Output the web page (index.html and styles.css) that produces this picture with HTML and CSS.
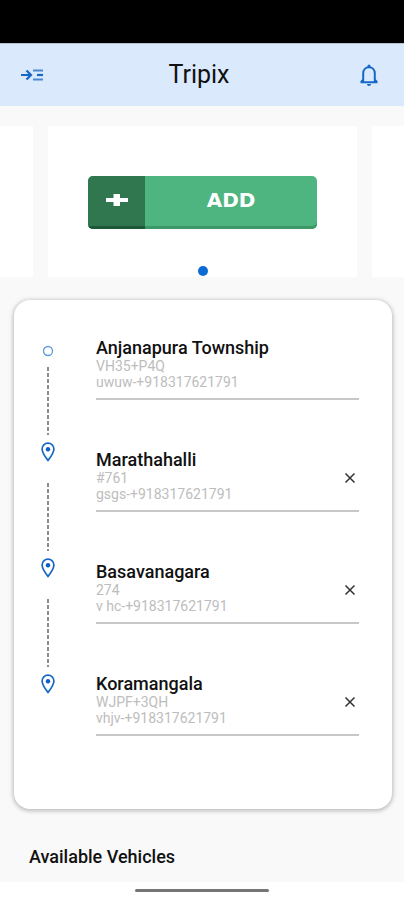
FILE: index.html
```html
<!DOCTYPE html>
<html lang="en">
<head>
<meta charset="utf-8">
<meta name="viewport" content="width=device-width, initial-scale=1">
<title>Tripix</title>
<link rel="stylesheet" href="styles.css">
</head>
<body>
<svg class="sprite" aria-hidden="true">
  <symbol id="pin" viewBox="0 0 14 20">
    <path d="M7 1.2C3.7 1.2 1.1 3.8 1.1 7c0 4 5.9 11.400 5.900 11.400S12.900 11 12.900 7C12.900 3.800 10.300 1.200 7 1.200Z" fill="none" stroke="#1668c2" stroke-width="1.700"/>
    <circle cx="7" cy="7.200" r="2.200" fill="#0d5cc0"/>
  </symbol>
  <symbol id="close" viewBox="0 0 12 12">
    <path d="M1.500 1.500l9 9M10.500 1.500l-9 9" stroke="#333" stroke-width="1.500"/>
  </symbol>
</svg>
<div class="status-bar"></div>
<header class="app-bar">
  <button class="icon-button" aria-label="Open menu">
    <svg width="24" height="16" viewBox="0 0 24 16" fill="none" stroke="#4a88cf" stroke-width="2.200">
      <path d="M1 8h9M6.500 3.500L11 8l-4.500 4.500" stroke="#1766c8"/>
      <path d="M13 3.500h10M13 12.500h10"/>
      <path d="M17 8h6" stroke="#1766c8"/>
    </svg>
  </button>
  <h1 class="app-title">Tripix</h1>
  <button class="icon-button" aria-label="Notifications">
    <svg width="20" height="24" viewBox="0 0 20 24">
      <path d="M1.500 19.200h17M4.200 19V10.500C4.200 6.500 6.700 4.300 10 4.300s5.800 2.200 5.800 6.200V19M2 19l2.200-2.200M18 19l-2.200-2.200" fill="none" stroke="#1668c8" stroke-width="2"/>
      <path d="M8.500 4.500V3a1.500 1.500 0 0 1 3 0v1.500ZM8 21h4a2 2 0 0 1-4 0Z" fill="#1668c8"/>
    </svg>
  </button>
</header>
<main class="page">
  <section class="carousel" aria-label="Offers">
    <div class="slide slide-edge"></div>
    <div class="slide slide-main">
      <button class="add-button">
        <span class="add-plus"><svg width="22" height="14" viewBox="0 0 22 14" aria-hidden="true"><path d="M0 5h7.500V1h6.500v4h8v4h-8v4H7.500V9H0Z" fill="#fff"/></svg></span>
        <span class="add-label">ADD</span>
      </button>
      <span class="dot"></span>
    </div>
    <div class="slide slide-edge"></div>
  </section>
  <section class="route-card" aria-label="Route">
    <div class="timeline" aria-hidden="true">
      <svg class="origin" width="12" height="12" viewBox="0 0 12 12"><circle cx="6" cy="6" r="4.500" fill="none" stroke="#5c9bd6" stroke-width="1.300"/></svg>
      <span class="dash"></span>
      <svg class="pin"><use href="#pin"/></svg>
      <span class="dash"></span>
      <svg class="pin"><use href="#pin"/></svg>
      <span class="dash"></span>
      <svg class="pin"><use href="#pin"/></svg>
    </div>
    <ol class="stops">
      <li class="stop">
        <div><h2 class="place">Anjanapura Township</h2><p class="detail">VH35+P4Q</p><p class="detail">uwuw-+918317621791</p></div>
      </li>
      <li class="stop">
        <div><h2 class="place">Marathahalli</h2><p class="detail">#761</p><p class="detail">gsgs-+918317621791</p></div>
        <button class="remove" aria-label="Remove Marathahalli"><svg width="12" height="12"><use href="#close"/></svg></button>
      </li>
      <li class="stop">
        <div><h2 class="place">Basavanagara</h2><p class="detail">274</p><p class="detail">v hc-+918317621791</p></div>
        <button class="remove" aria-label="Remove Basavanagara"><svg width="12" height="12"><use href="#close"/></svg></button>
      </li>
      <li class="stop">
        <div><h2 class="place">Koramangala</h2><p class="detail">WJPF+3QH</p><p class="detail">vhjv-+918317621791</p></div>
        <button class="remove" aria-label="Remove Koramangala"><svg width="12" height="12"><use href="#close"/></svg></button>
      </li>
    </ol>
  </section>
  <h2 class="section-title">Available Vehicles</h2>
</main>
<footer class="nav-bar"><span class="handle"></span></footer>
</body>
</html>
```
FILE: styles.css
```css
* {
  box-sizing: border-box;
}

body {
  margin: 0;
  background: #fff;
  color: #111;
  font-family: Roboto, "Liberation Sans", sans-serif;
}

h1, h2, p, ol {
  margin: 0;
  padding: 0;
}

button {
  padding: 0;
  border: 0;
  background: none;
  font: inherit;
}

svg {
  display: block;
}

.sprite {
  position: absolute;
  width: 0;
  height: 0;
}

.status-bar {
  height: 43px;
  background: #000;
}

.app-bar {
  display: flex;
  align-items: center;
  justify-content: space-between;
  height: 63px;
  padding: 0 20px;
  border-top: 1px solid #b4c0cd;
  background: #daeafc;
}

.icon-button {
  display: grid;
  place-items: center;
  width: 24px;
  height: 32px;
}

.icon-button:last-child {
  width: 30px;
}

.app-title {
  font-size: 25px;
  line-height: 32px;
  font-weight: 400;
}

.page {
  padding-top: 20px;
  background: #f9f9f9;
}

.carousel {
  display: grid;
  grid-template-columns: 33px 1fr 32px;
  gap: 15px;
}

.slide {
  height: 151px;
  background: #fff;
}

.slide-main {
  display: flex;
  flex-direction: column;
  align-items: center;
  justify-content: space-between;
  padding: 50px 40px 1px;
}

.add-button {
  display: flex;
  width: 100%;
  height: 53px;
  overflow: hidden;
  border-radius: 5px;
  background: #4fb580;
  box-shadow: inset 0 -3px #3d9868;
  color: #fff;
}

.add-plus {
  display: grid;
  place-items: center;
  width: 57px;
  padding-bottom: 5px;
  background: #30774f;
  box-shadow: inset 0 -3px #1c5937;
}

.add-label {
  flex: 1;
  align-self: center;
  padding-bottom: 5px;
  font-family: "DejaVu Sans", sans-serif;
  font-size: 20px;
  font-weight: 700;
  line-height: 20px;
}

.dot {
  width: 10px;
  height: 10px;
  border-radius: 50%;
  background: #0b6bd3;
}

.route-card {
  display: grid;
  grid-template-columns: 14px 1fr;
  gap: 41px;
  margin: 23px 12px 0 14px;
  padding: 37px 33px 73px 27px;
  border-radius: 16px;
  background: #fff;
  box-shadow: 0 1px 4px 1px rgba(0, 0, 0, 0.25);
}

.timeline {
  display: flex;
  flex-direction: column;
  align-items: center;
  padding-top: 8px;
}

.origin {
  margin-bottom: 10px;
}

.dash {
  width: 2px;
  height: 68px;
  background: repeating-linear-gradient(#8c8c8c 0 4px, transparent 4px 6px);
}

.pin {
  width: 14px;
  height: 20px;
  margin: 7px 0 21px;
}

.stops {
  list-style: none;
}

.stop {
  display: flex;
  justify-content: space-between;
  height: 63px;
  border-bottom: 2px solid #c8c8c8;
}

.stop + .stop {
  margin-top: 49px;
}

.place {
  font-size: 18px;
  line-height: 21px;
  font-weight: 500;
}

.detail {
  color: #bdbdbd;
  font-size: 14px;
  line-height: 16px;
}

.remove {
  display: grid;
  place-items: center;
  width: 18px;
  height: 24px;
  margin-top: 17px;
}

.section-title {
  padding: 36px 29px 13px;
  font-size: 18px;
  line-height: 24px;
  font-weight: 500;
}

.nav-bar {
  display: flex;
  justify-content: center;
  padding: 7px 0 8px;
}

.handle {
  width: 134px;
  height: 3px;
  border-radius: 2px;
  background: #757575;
}
```
